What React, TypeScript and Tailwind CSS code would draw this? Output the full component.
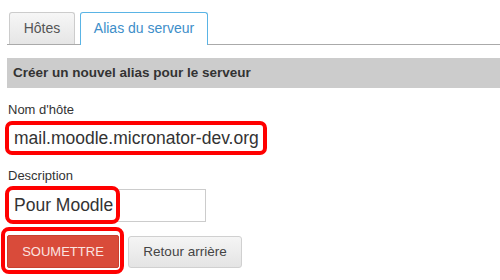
export default function App() {
  return (
    <div className="w-[500px] h-[280px] overflow-hidden bg-white pt-[12px] font-['Liberation_Sans',Arial,sans-serif] text-[#333]">
      {/* Tabs */}
      <div className="ml-[7px] flex h-[33px] items-start gap-[5px] border-b border-[#aaa] pl-[2px]">
        <div className="flex h-[32px] w-[66px] items-center justify-center rounded-t-[3px] border border-b-0 border-[#ccc] bg-gradient-to-b from-[#f6f6f6] to-[#e6e6e6] text-[14px] text-[#555]">
          Hôtes
        </div>
        <div className="relative z-10 flex h-[33px] w-[128px] items-center justify-center rounded-t-[3px] border border-b-0 border-[#5ab4e5] bg-white pb-px text-[14px] text-[#3d8ec9]">
          Alias du serveur
        </div>
      </div>

      {/* Section header */}
      <div className="ml-[7px] mt-[13px] flex h-[30px] items-center bg-[#cccccc] pl-[6px] text-[13.5px] font-bold text-[#333]">
        Créer un nouvel alias pour le serveur
      </div>

      {/* Hostname */}
      <div className="ml-[8px] mt-[14px] h-[16px] text-[13px] leading-[16px]">Nom d'hôte</div>
      <div className="relative mt-[3px] h-[34px]">
        <div className="ml-[8px] pt-[3px]">
          <div className="flex h-[28px] w-[256px] items-center whitespace-nowrap border border-[#ccc] pl-[5px] text-[17.5px] text-[#333]">
            mail.moodle.micronator-dev.org
          </div>
        </div>
        <div className="absolute left-[5px] top-0 h-[34px] w-[262px] rounded-[7px] border-4 border-[#f00]" />
      </div>

      {/* Description */}
      <div className="ml-[8px] mt-[13px] h-[16px] text-[13px] leading-[16px]">Description</div>
      <div className="relative mt-[2px] h-[38px]">
        <div className="ml-[8px] pt-[3px]">
          <div className="flex h-[33px] w-[198px] items-center whitespace-nowrap border border-[#ccc] pl-[5px] text-[17.5px] text-[#333]">
            Pour Moodle
          </div>
        </div>
        <div className="absolute left-[5px] top-0 h-[38px] w-[115px] rounded-[8px] border-4 border-[#f00]" />
      </div>

      {/* Buttons */}
      <div className="relative mt-[3px] h-[47px]">
        <div className="flex items-start gap-[9px] pl-[7px] pt-[8px]">
          <button className="flex h-[33px] w-[112px] items-center justify-center rounded-[2px] border border-[#c9402f] bg-[#d94b3a] text-[13px] text-[#fbe4e0]">
            SOUMETTRE
          </button>
          <button className="mt-px flex h-[32px] w-[114px] items-center justify-center rounded-[3px] border border-[#d0d0d0] bg-gradient-to-b from-[#f5f5f5] to-[#e4e4e4] text-[13.5px] text-[#444]">
            Retour arrière
          </button>
        </div>
        <div className="absolute left-[1px] top-0 h-[47px] w-[123px] rounded-[8px] border-4 border-[#f00]" />
      </div>
    </div>
  );
}
